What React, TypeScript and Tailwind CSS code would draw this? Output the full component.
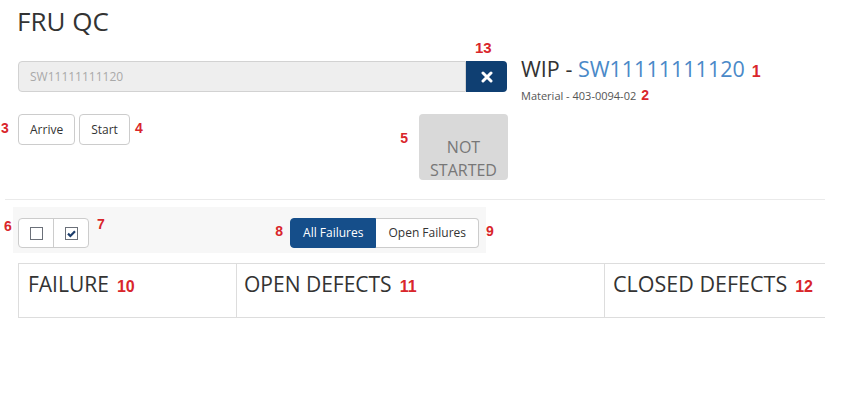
import React from "react";

function Num({ n, className = "" }: { n: string; className?: string }) {
  return (
    <span
      className={`font-['Liberation_Sans',Arial,sans-serif] font-bold text-[#d9262b] ${className}`}
    >
      {n}
    </span>
  );
}

function Box({ checked }: { checked?: boolean }) {
  return (
    <svg width="13" height="13" viewBox="0 0 13 13">
      <rect x="0.5" y="0.5" width="12" height="12" fill="#fff" stroke="#6b7079" />
      {checked && (
        <path d="M3 6.6 L5.4 9 L10 4.2" fill="none" stroke="#1c3d6b" strokeWidth="2.2" />
      )}
    </svg>
  );
}

export default function App() {
  return (
    <div className="w-[842px] h-[413px] overflow-hidden bg-white text-[#333] font-['Open_Sans',sans-serif]">
      <h1 className="mt-[6px] pl-[17px] text-[26px] leading-[30px] font-normal">FRU QC</h1>

      {/* scan row */}
      <div className="mt-[21px] pl-[18px] flex items-start">
        <div className="mt-[4px] flex w-[489px]">
          <div className="flex-1 h-[31px] rounded-l-[4px] border border-[#d2d2d2] bg-[#eeeeee] pl-[11px] text-[12px] leading-[29px] text-[#a9a9a9]">
            SW11111111120
          </div>
          <button className="relative w-[41px] h-[31px] rounded-r-[4px] bg-[#0f3f72] flex items-center justify-center">
            <Num n="13" className="absolute -top-[21px] left-[9px] text-[15px] leading-[16px]" />
            <svg width="12" height="12" viewBox="0 0 12 12">
              <path d="M2 2 L10 10 M10 2 L2 10" stroke="#fff" strokeWidth="3" strokeLinecap="round" />
            </svg>
          </button>
        </div>
        <div className="pl-[14px]">
          <div className="text-[21.5px] leading-[24px] whitespace-nowrap">
            WIP - <span className="text-[#4a89c8]">SW11111111120</span>
            <Num n="1" className="ml-[7px] text-[16px]" />
          </div>
          <div className="mt-[4px] text-[11px] leading-[15px] text-[#555] whitespace-nowrap">
            Material - 403-0094-02
            <Num n="2" className="ml-[5px] text-[14px] leading-[15px]" />
          </div>
        </div>
      </div>

      {/* action row */}
      <div className="mt-[11px] flex items-start w-[508px]">
        <Num n="3" className="mt-[6px] w-[18px] pl-[1px] text-[14px] leading-[16px]" />
        <button className="h-[31px] rounded-[4px] border border-[#ccc] bg-white px-[11px] text-[12px] text-[#333]">
          Arrive
        </button>
        <button className="ml-[4px] h-[31px] rounded-[4px] border border-[#ccc] bg-white px-[11px] text-[12px] text-[#333]">
          Start
        </button>
        <Num n="4" className="mt-[6px] ml-[5px] text-[14px] leading-[16px]" />
        <Num n="5" className="ml-auto mt-[16px] text-[14px] leading-[16px]" />
        <div className="ml-[11px] w-[89px] h-[66px] rounded-[4px] bg-[#d9d9d9] pt-[22px] text-center text-[16px] leading-[23px] text-[#777]">
          NOT STARTED
        </div>
      </div>

      <div className="mt-[19px] ml-[5px] w-[820px] h-px bg-[#eaeaea]" />

      {/* filter row */}
      <div className="mt-[7px] flex items-start">
        <Num n="6" className="mt-[11px] w-[13px] pl-[4px] text-[14px] leading-[16px]" />
        <div className="w-[473px] h-[46px] bg-[#f7f7f7] pt-[11px] pl-[5px] pr-[7px] flex items-start">
          <div className="flex h-[30px] rounded-[4px] border border-[#ccc] bg-white">
            <div className="w-[35px] flex items-center justify-center border-r border-[#ccc]">
              <Box />
            </div>
            <div className="w-[34px] flex items-center justify-center">
              <Box checked />
            </div>
          </div>
          <Num n="7" className="ml-[8px] -mt-[2px] text-[14px] leading-[16px]" />
          <Num n="8" className="ml-auto mt-[5px] text-[14px] leading-[16px]" />
          <div className="ml-[7px] flex h-[30px] text-[12px]">
            <button className="rounded-l-[4px] border border-[#154e8a] bg-[#154e8a] px-[12px] text-white">
              All Failures
            </button>
            <button className="rounded-r-[4px] border border-l-0 border-[#ccc] bg-white px-[12px] text-[#333]">
              Open Failures
            </button>
          </div>
        </div>
        <Num n="9" className="mt-[16px] text-[14px] leading-[16px]" />
      </div>

      {/* defects table */}
      <div className="mt-[10px] ml-[18px] w-[807px] h-[55px] grid grid-cols-[217px_368px_1fr] border-y border-l border-[#ddd]">
        <div className="pl-[9px] pt-[6px] text-[21px] leading-[28px] whitespace-nowrap">
          FAILURE<Num n="10" className="ml-[8px] text-[16px]" />
        </div>
        <div className="border-l border-[#ddd] pl-[7px] pt-[6px] text-[21px] leading-[28px] whitespace-nowrap">
          OPEN DEFECTS<Num n="11" className="ml-[8px] text-[16px]" />
        </div>
        <div className="border-l border-[#ddd] pl-[8px] pt-[6px] text-[21.5px] leading-[28px] whitespace-nowrap">
          CLOSED DEFECTS<Num n="12" className="ml-[8px] text-[16px]" />
        </div>
      </div>
    </div>
  );
}
